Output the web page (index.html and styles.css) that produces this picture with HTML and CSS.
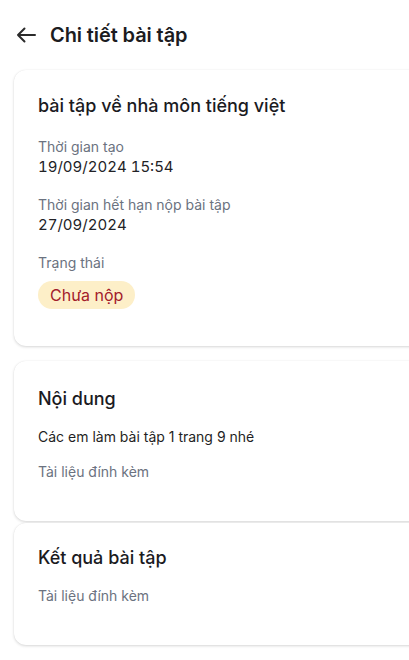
FILE: index.html
```html
<!DOCTYPE html>
<html lang="vi">
<head>
<meta charset="utf-8">
<link rel="stylesheet" href="styles.css">
</head>
<body>
<div class="page">
  <header class="topbar">
    <svg class="back" width="20" height="16" viewBox="0 0 20 16"><path d="M19 8H2M8.5 1.5L2 8l6.5 6.5" fill="none" stroke="#2b2b2b" stroke-width="2" stroke-linecap="round" stroke-linejoin="round"/></svg>
    <h1 class="title">Chi tiết bài tập</h1>
  </header>

  <section class="card card-info">
    <h2 class="card-title">bài tập về nhà môn tiếng việt</h2>
    <div class="label first">Thời gian tạo</div>
    <div class="value">19/09/2024 15:54</div>
    <div class="label">Thời gian hết hạn nộp bài tập</div>
    <div class="value">27/09/2024</div>
    <div class="label">Trạng thái</div>
    <span class="badge">Chưa nộp</span>
  </section>

  <section class="card card-content">
    <h2 class="card-title">Nội dung</h2>
    <p class="text">Các em làm bài tập 1 trang 9 nhé</p>
    <p class="muted">Tài liệu đính kèm</p>
  </section>

  <section class="card card-result">
    <h2 class="card-title">Kết quả bài tập</h2>
    <p class="muted">Tài liệu đính kèm</p>
  </section>
</div>
</body>
</html>
```
FILE: styles.css
```css
* { box-sizing: border-box; }
html, body { margin: 0; padding: 0; background: #fff; }
body {
  font-family: Inter, "Noto Sans", sans-serif;
  color: #1b1b1f;
  overflow: hidden;
  width: 409px;
  height: 660px;
}
.page { padding: 0 0 0 14px; width: 440px; }
.topbar {
  display: flex;
  align-items: center;
  height: 70px;
  padding-left: 2px;
}
.back { display: block; margin-right: 14px; }
.title {
  margin: 0;
  font-size: 20px;
  font-weight: 600;
  line-height: 28px;
  color: #1c1c1f;
  letter-spacing: -0.1px;
}
.card {
  background: #fff;
  border-radius: 12px;
  box-shadow: 0 1px 3px rgba(0,0,0,0.16), 0 0 1px rgba(0,0,0,0.08);
  padding: 24px 24px 37px;
  display: flex;
  flex-direction: column;
  align-items: flex-start;
}
.card-title {
  margin: 0;
  font-size: 18px;
  font-weight: 500;
  line-height: 24px;
  color: #1b1b1f;
}
.label {
  font-size: 14px;
  line-height: 20px;
  color: #6b7280;
  margin-top: 18px;
}
.label.first { margin-top: 19px; }
.value {
  font-size: 15px;
  font-weight: 400;
  line-height: 20px;
  color: #222226;
  font-variant-numeric: tabular-nums;
}
.badge {
  margin-top: 8px;
  height: 28px;
  line-height: 28px;
  padding: 0 12px;
  border-radius: 14px;
  background: #fdefc8;
  color: #a3202b;
  font-size: 16px;
}
.card-content { margin-top: 15px; padding: 24px 24px 39px; }
.card-content .card-title, .card-result .card-title { line-height: 28px; }
.text {
  margin: 14px 0 0;
  font-size: 14px;
  line-height: 20px;
  color: #1f1f24;
}
.muted {
  margin: 15px 0 0;
  font-size: 14px;
  line-height: 20px;
  color: #6b7280;
}
.card-result { margin-top: 2px; padding: 21px 24px 39px; }
.card-result .muted { margin-top: 14px; }
```
